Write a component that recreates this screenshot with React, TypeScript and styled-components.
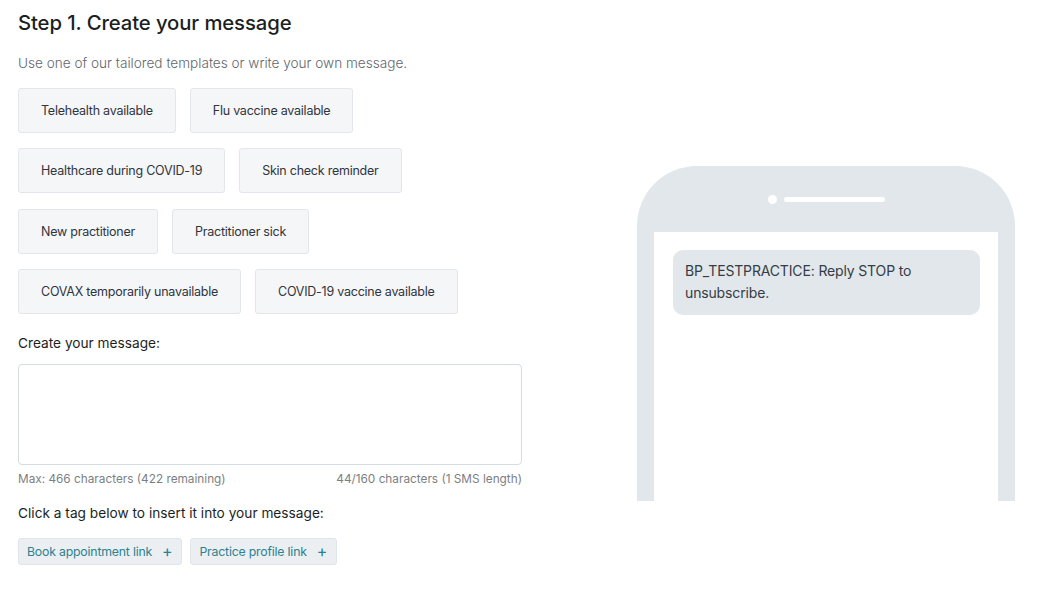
import React from "react";
import styled, { createGlobalStyle } from "styled-components";

const GlobalStyle = createGlobalStyle`
  html, body { margin: 0; padding: 0; background: #ffffff; }
  body { font-family: Inter, "Noto Sans", "Liberation Sans", sans-serif; -webkit-font-smoothing: antialiased; }
  * { box-sizing: border-box; }
`;

const Page = styled.div`
  display: grid;
  grid-template-columns: 504px 378px;
  column-gap: 115px;
  padding: 0 18px;
  align-items: start;
`;

const Left = styled.div`
  display: flex;
  flex-direction: column;
`;

const Heading = styled.h1`
  margin: 11px 0 0;
  font-size: 20.3px;
  line-height: 24px;
  font-weight: 500;
  color: #1b1f23;
  letter-spacing: -0.1px;
`;

const Subtitle = styled.p`
  margin: 18px 0 0;
  font-size: 13.6px;
  line-height: 20px;
  font-weight: 300;
  color: #62676c;
`;

const Templates = styled.div`
  margin-top: 15px;
  display: flex;
  flex-direction: column;
  gap: 15.3px;
`;

const TemplateRow = styled.div`
  display: flex;
  gap: 14px;
`;

const TemplateButton = styled.button`
  height: 45px;
  padding: 0 22px;
  border: 1px solid #e3e6ea;
  border-radius: 3px;
  background: #f5f6f8;
  color: #2f353d;
  font-family: inherit;
  font-size: 12.5px;
  letter-spacing: -0.24px;
  font-weight: 400;
  cursor: pointer;
`;

const Label = styled.div<{ $top: number }>`
  font-size: 13.7px;
  line-height: 20px;
  color: #1b1f23;
  margin-top: ${(p) => p.$top}px;
`;

const MessageBox = styled.textarea`
  margin-top: 11px;
  width: 504px;
  height: 101px;
  resize: none;
  border: 1px solid #d3dce2;
  border-radius: 4px;
  font-family: inherit;
  font-size: 14px;
  padding: 8px 10px;
  outline: none;
`;

const Counts = styled.div`
  margin-top: 6px;
  display: flex;
  justify-content: space-between;
  font-size: 11.8px;
  line-height: 16px;
  color: #7b7f84;
`;

const Tags = styled.div`
  margin-top: 15px;
  display: flex;
  gap: 8px;
`;

const Tag = styled.button`
  height: 27px;
  display: inline-flex;
  align-items: center;
  gap: 10px;
  padding: 0 9px 0 8px;
  border: 1px solid #dfe5ea;
  border-radius: 3px;
  background: #ebeff2;
  color: #2b8290;
  font-family: inherit;
  font-size: 12.3px;
  letter-spacing: -0.2px;
  cursor: pointer;
`;

const Plus = styled.span`
  font-size: 16px;
  line-height: 1;
  font-weight: 400;
`;

const Phone = styled.div`
  margin-top: 166px;
  width: 378px;
  height: 335px;
  background: #e2e7eb;
  border-radius: 60px 60px 0 0;
  padding: 0 17px;
  display: flex;
  flex-direction: column;
`;

const Speaker = styled.div`
  height: 66px;
  display: flex;
  align-items: center;
  justify-content: center;
  gap: 7px;
`;

const Camera = styled.span`
  width: 9px;
  height: 9px;
  border-radius: 50%;
  background: #ffffff;
`;

const Grille = styled.span`
  width: 101px;
  height: 5px;
  border-radius: 3px;
  background: #ffffff;
`;

const Screen = styled.div`
  flex: 1;
  background: #ffffff;
  padding: 18px 18px 0 19px;
`;

const Bubble = styled.div`
  background: #e2e7eb;
  border-radius: 10px;
  padding: 10px 12px 11px;
  font-size: 14px;
  letter-spacing: -0.15px;
  line-height: 22px;
  color: #343c45;
`;

const templates: string[][] = [
  ["Telehealth available", "Flu vaccine available"],
  ["Healthcare during COVID-19", "Skin check reminder"],
  ["New practitioner", "Practitioner sick"],
  ["COVAX temporarily unavailable", "COVID-19 vaccine available"],
];

export default function App() {
  return (
    <>
      <GlobalStyle />
      <Page>
        <Left>
          <Heading>Step 1. Create your message</Heading>
          <Subtitle>Use one of our tailored templates or write your own message.</Subtitle>
          <Templates>
            {templates.map((row, i) => (
              <TemplateRow key={i}>
                {row.map((t) => (
                  <TemplateButton key={t}>{t}</TemplateButton>
                ))}
              </TemplateRow>
            ))}
          </Templates>
          <Label $top={19}>Create your message:</Label>
          <MessageBox />
          <Counts>
            <span>Max: 466 characters (422 remaining)</span>
            <span>44/160 characters (1 SMS length)</span>
          </Counts>
          <Label $top={16}>Click a tag below to insert it into your message:</Label>
          <Tags>
            <Tag>
              Book appointment link <Plus>+</Plus>
            </Tag>
            <Tag>
              Practice profile link <Plus>+</Plus>
            </Tag>
          </Tags>
        </Left>
        <Phone>
          <Speaker>
            <Camera />
            <Grille />
          </Speaker>
          <Screen>
            <Bubble>BP_TESTPRACTICE: Reply STOP to unsubscribe.</Bubble>
          </Screen>
        </Phone>
      </Page>
    </>
  );
}
